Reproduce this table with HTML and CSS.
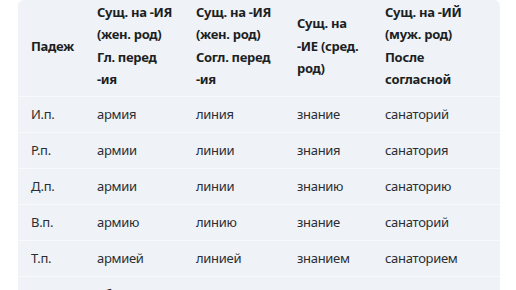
FILE: index.html
```html
<!DOCTYPE html>
<html lang="ru">
<head>
<meta charset="utf-8">
<link rel="stylesheet" href="styles.css">
</head>
<body>
<div class="wrap">
<table class="decl">
<colgroup>
<col class="c1"><col class="c2"><col class="c3"><col class="c4"><col class="c5">
</colgroup>
<thead>
<tr>
<th>Падеж</th>
<th>Сущ. на -ИЯ<br>(жен. род)<br>Гл. перед<br>-ия</th>
<th>Сущ. на -ИЯ<br>(жен. род)<br>Согл. перед<br>-ия</th>
<th>Сущ. на<br>-ИЕ (сред.<br>род)</th>
<th>Сущ. на -ИЙ<br>(муж. род)<br>После<br>согласной</th>
</tr>
</thead>
<tbody>
<tr><td>И.п.</td><td>армия</td><td>линия</td><td>знание</td><td>санаторий</td></tr>
<tr><td>Р.п.</td><td>армии</td><td>линии</td><td>знания</td><td>санатория</td></tr>
<tr><td>Д.п.</td><td>армии</td><td>линии</td><td>знанию</td><td>санаторию</td></tr>
<tr><td>В.п.</td><td>армию</td><td>линию</td><td>знание</td><td>санаторий</td></tr>
<tr><td>Т.п.</td><td>армией</td><td>линией</td><td>знанием</td><td>санаторием</td></tr>
<tr><td>П.п.</td><td>об армии</td><td>о линии</td><td>о знании</td><td>о санатории</td></tr>
</tbody>
</table>
</div>
</body>
</html>
```

FILE: styles.css
```css
html, body {
  margin: 0;
  padding: 0;
  background: #ffffff;
}
body {
  font-family: "Noto Sans", "Open Sans", sans-serif;
  font-size: 13px;
  letter-spacing: -0.3px;
  color: #2a2e32;
  overflow: hidden;
}
.wrap {
  padding: 0 16px 0 18px;
}
.decl {
  width: 482px;
  table-layout: fixed;
  border-collapse: separate;
  border-spacing: 0;
  background: #eff2f7;
  border-radius: 6px;
}
.c1 { width: 66px; }
.c2 { width: 99px; }
.c3 { width: 101px; }
.c4 { width: 88px; }
.c5 { width: 128px; }
.decl th {
  text-align: left;
  font-weight: 700;
  color: #1c1f23;
  line-height: 22.4px;
  padding: 1px 13px 5px;
  vertical-align: middle;
  white-space: nowrap;
  border-bottom: 1px solid #f8f9fb;
}
.decl td {
  padding: 7px 13px;
  line-height: 21px;
  border-bottom: 1px solid #f8f9fb;
  white-space: nowrap;
}
```
